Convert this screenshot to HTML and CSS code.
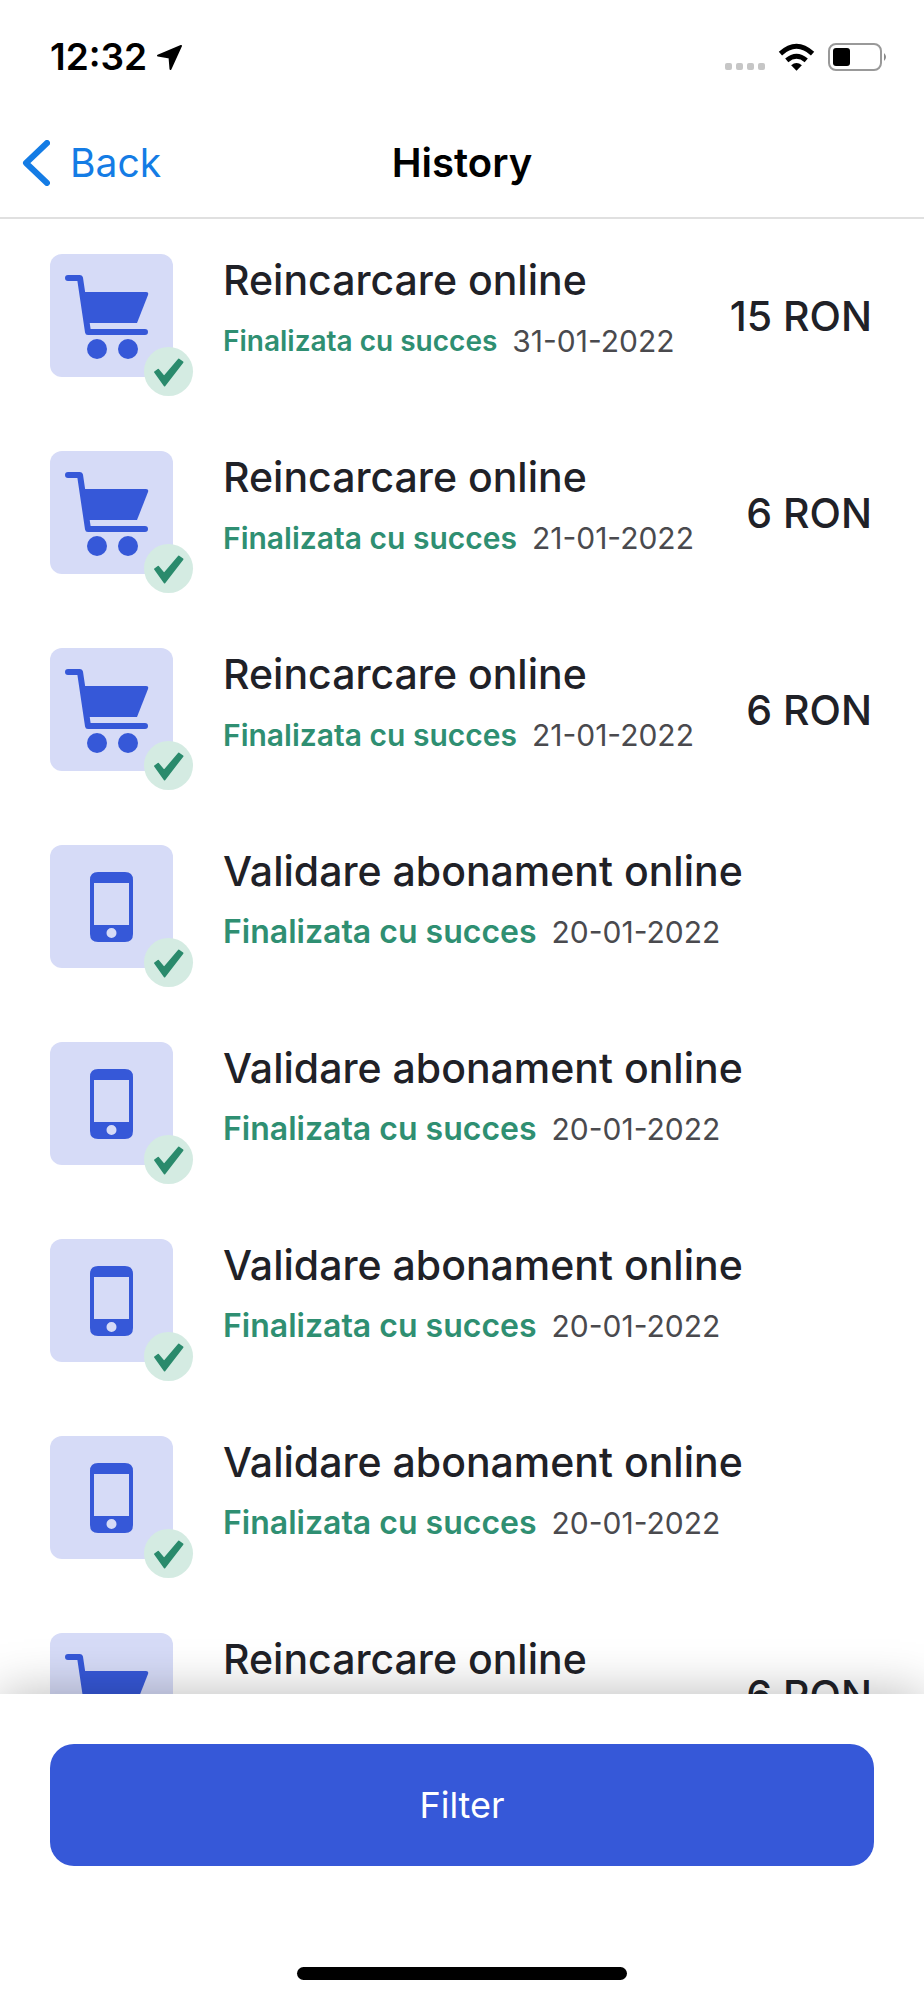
FILE: index.html
```html
<!DOCTYPE html>
<html lang="ro">
<head>
<meta charset="utf-8">
<meta name="viewport" content="width=device-width, initial-scale=1">
<title>History</title>
<link rel="stylesheet" href="styles.css">
</head>
<body>
<svg class="sprite" aria-hidden="true">
  <symbol id="cart" viewBox="0 0 123 123">
    <path d="M18 24h12l8 54h57" fill="none" stroke="currentColor" stroke-width="6" stroke-linecap="round" stroke-linejoin="round"/>
    <path d="M32 38h64q3 0 2 3L87 69H36z" fill="currentColor"/>
    <circle cx="47" cy="95" r="10" fill="currentColor"/>
    <circle cx="78" cy="95" r="10" fill="currentColor"/>
  </symbol>
  <symbol id="phone" viewBox="0 0 123 123">
    <path fill="currentColor" fill-rule="evenodd" d="M48 27h27q8 0 8 8v54q0 8-8 8H48q-8 0-8-8V35q0-8 8-8zM44 38v42h35V38zM61.500 83a5 5 0 1 0 0 10a5 5 0 1 0 0-10z"/>
  </symbol>
  <symbol id="check" viewBox="0 0 50 50">
    <path d="M11 25.500l3.500-2.500 6 7L35.500 12.500l4 3L21 39.500z" fill="currentColor" stroke="currentColor" stroke-width="1.500" stroke-linejoin="round"/>
  </symbol>
</svg>

<div class="status-bar">
  <div class="clock">
    <span>12:32</span>
    <svg class="location" viewBox="0 0 26 26" aria-hidden="true"><path d="M25 1L14 25l-1-12L1 11z" fill="#000" stroke="#000" stroke-width="2" stroke-linejoin="round"/></svg>
  </div>
  <div class="indicators">
    <span class="dots"><i></i><i></i><i></i><i></i></span>
    <svg class="wifi" viewBox="0 0 38 28" aria-hidden="true">
      <g fill="none" stroke="#000" stroke-width="5"><path d="M2.500 10.500q16.500-15 33 0"/><path d="M9 17.500q10-8.500 20 0"/></g>
      <path d="M13.500 22.500q5.500-4.500 11 0L19 28z"/>
    </svg>
    <svg class="battery" viewBox="0 0 60 28" aria-hidden="true">
      <rect x="1" y="1" width="52" height="26" rx="7" fill="none" stroke="#999" stroke-width="2"/>
      <rect x="5" y="5" width="17" height="18" rx="3"/>
      <path d="M56 10q4 4 0 8z" fill="#888"/>
    </svg>
  </div>
</div>

<header class="nav-bar">
  <a class="back" href="#">
    <svg class="chevron" viewBox="0 0 28 46" aria-hidden="true"><path d="M25 3L4 23l21 20" fill="none" stroke="currentColor" stroke-width="6" stroke-linecap="round" stroke-linejoin="round"/></svg>
    <span>Back</span>
  </a>
  <h1 class="nav-title">History</h1>
</header>

<main class="history">
  <ul class="list">
    <li class="row">
      <div class="tile"><svg class="tile-icon"><use href="#cart"/></svg><span class="badge"><svg><use href="#check"/></svg></span></div>
      <div class="info"><h2 class="name">Reincarcare online</h2><p class="meta meta-small"><span class="state">Finalizata cu succes</span><time class="date">31-01-2022</time></p></div>
      <p class="amount">15 RON</p>
    </li>
    <li class="row">
      <div class="tile"><svg class="tile-icon"><use href="#cart"/></svg><span class="badge"><svg><use href="#check"/></svg></span></div>
      <div class="info"><h2 class="name">Reincarcare online</h2><p class="meta meta-medium"><span class="state">Finalizata cu succes</span><time class="date">21-01-2022</time></p></div>
      <p class="amount">6 RON</p>
    </li>
    <li class="row">
      <div class="tile"><svg class="tile-icon"><use href="#cart"/></svg><span class="badge"><svg><use href="#check"/></svg></span></div>
      <div class="info"><h2 class="name">Reincarcare online</h2><p class="meta meta-medium"><span class="state">Finalizata cu succes</span><time class="date">21-01-2022</time></p></div>
      <p class="amount">6 RON</p>
    </li>
    <li class="row">
      <div class="tile"><svg class="tile-icon"><use href="#phone"/></svg><span class="badge"><svg><use href="#check"/></svg></span></div>
      <div class="info"><h2 class="name">Validare abonament online</h2><p class="meta"><span class="state">Finalizata cu succes</span><time class="date">20-01-2022</time></p></div>
    </li>
    <li class="row">
      <div class="tile"><svg class="tile-icon"><use href="#phone"/></svg><span class="badge"><svg><use href="#check"/></svg></span></div>
      <div class="info"><h2 class="name">Validare abonament online</h2><p class="meta"><span class="state">Finalizata cu succes</span><time class="date">20-01-2022</time></p></div>
    </li>
    <li class="row">
      <div class="tile"><svg class="tile-icon"><use href="#phone"/></svg><span class="badge"><svg><use href="#check"/></svg></span></div>
      <div class="info"><h2 class="name">Validare abonament online</h2><p class="meta"><span class="state">Finalizata cu succes</span><time class="date">20-01-2022</time></p></div>
    </li>
    <li class="row">
      <div class="tile"><svg class="tile-icon"><use href="#phone"/></svg><span class="badge"><svg><use href="#check"/></svg></span></div>
      <div class="info"><h2 class="name">Validare abonament online</h2><p class="meta"><span class="state">Finalizata cu succes</span><time class="date">20-01-2022</time></p></div>
    </li>
    <li class="row">
      <div class="tile"><svg class="tile-icon"><use href="#cart"/></svg></div>
      <div class="info"><h2 class="name">Reincarcare online</h2></div>
      <p class="amount">6 RON</p>
    </li>
  </ul>
</main>

<footer class="footer">
  <button class="filter" type="button">Filter</button>
  <div class="home-indicator"></div>
</footer>
</body>
</html>
```

FILE: styles.css
```css
* { box-sizing: border-box; }

body {
  margin: 0;
  height: 100vh;
  display: flex;
  flex-direction: column;
  overflow: hidden;
  background: #fff;
  color: #202127;
  font-family: Inter, "Liberation Sans", sans-serif;
}

h1, h2, p, ul { margin: 0; padding: 0; }
svg { display: block; }
.sprite { position: absolute; width: 0; height: 0; }

.status-bar {
  flex: none;
  height: 114px;
  padding: 0 36px 0 50px;
  display: flex;
  align-items: center;
  justify-content: space-between;
  color: #000;
}
.clock { display: flex; align-items: center; gap: 10px; font-size: 37px; font-weight: 600; line-height: 44px; }
.location { width: 25px; height: 25px; }
.indicators { display: flex; align-items: center; gap: 13px; }
.dots { display: flex; gap: 4px; padding-top: 18px; }
.dots i { width: 7px; height: 7px; border-radius: 2px; background: #c6c6c6; }
.wifi { width: 37px; height: 28px; }
.battery { width: 60px; height: 28px; }

.nav-bar {
  flex: none;
  height: 105px;
  padding: 0 22px 6px;
  display: grid;
  grid-template-columns: 1fr auto 1fr;
  align-items: center;
  border-bottom: 2px solid #e0e0e0;
}
.back { display: flex; align-items: center; gap: 20px; color: #147ce5; text-decoration: none; font-size: 39px; line-height: 48px; }
.chevron { width: 28px; height: 46px; }
.nav-title { color: #000; font-size: 40px; font-weight: 600; line-height: 48px; }

.history { flex: 1 1 0; min-height: 0; overflow: hidden; }
.list { list-style: none; padding: 35px 52px 35px 50px; display: flex; flex-direction: column; gap: 74px; }
.row { display: flex; align-items: center; gap: 50px; height: 123px; }
.tile { position: relative; flex: none; width: 123px; height: 123px; border-radius: 12px; background: #d6dbf7; color: #3658d8; }
.tile-icon { width: 100%; height: 100%; }
.badge { position: absolute; right: -20px; bottom: -19px; width: 49px; height: 49px; border-radius: 50%; background: #d4ebe2; color: #2a8a6c; }
.badge svg { width: 100%; height: 100%; }
.info { flex: 1; align-self: flex-start; min-width: 0; white-space: nowrap; }
.name { font-size: 41px; font-weight: 500; line-height: 52px; }
.meta { display: flex; align-items: center; gap: 15px; height: 40px; margin-top: 15px; font-size: 32px; line-height: 40px; }
.meta-medium { font-size: 30px; }
.meta-small { font-size: 28px; }
.state { color: #2f8f72; font-weight: 600; }
.date { color: #4a4a4e; font-size: 30px; }
.amount { flex: none; font-size: 41px; font-weight: 500; line-height: 52px; }

.footer {
  flex: none;
  position: relative;
  padding: 50px 50px 20px;
  display: flex;
  flex-direction: column;
  align-items: center;
  gap: 101px;
  background: #fff;
  box-shadow: 0 0 48px rgba(0, 0, 0, 0.28);
}
.filter { width: 100%; height: 122px; border: 0; border-radius: 24px; background: #3658d8; color: #fff; font-family: inherit; font-size: 36px; }
.home-indicator { width: 40%; height: 13px; border-radius: 7px; background: #000; }
```
